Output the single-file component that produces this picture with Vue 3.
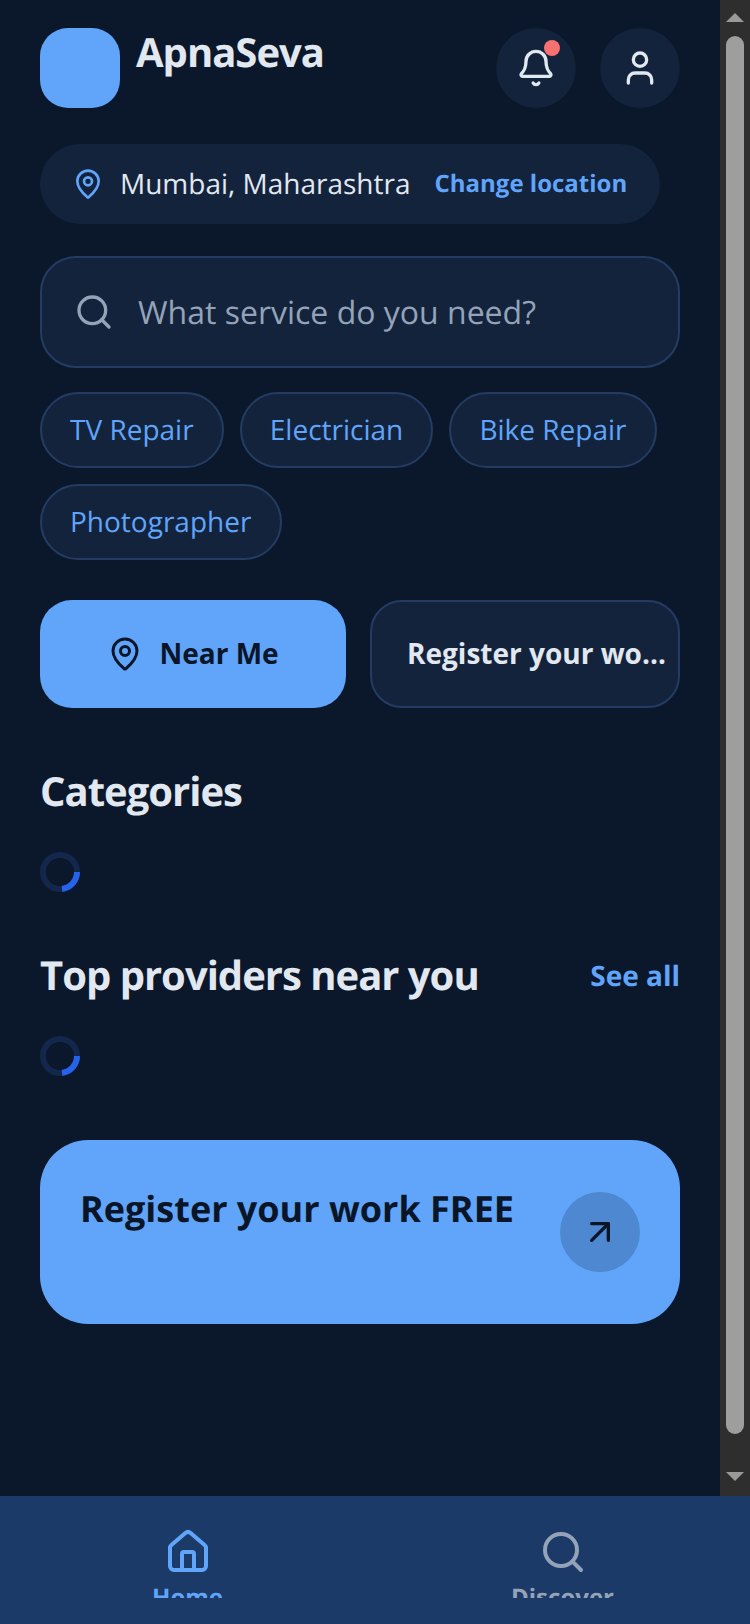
<template>
  <div class="app">
    <div class="body-row">
      <main class="content">
        <header class="top-bar">
          <div class="brand">
            <div class="logo"></div>
            <h1 class="brand-name">ApnaSeva</h1>
          </div>
          <div class="top-actions">
            <button class="round-btn">
              <svg class="icon-40" viewBox="0 0 24 24" fill="none" stroke="currentColor" stroke-width="2" stroke-linecap="round" stroke-linejoin="round">
                <path d="M10.268 21a2 2 0 0 0 3.464 0" />
                <path d="M3.262 15.326A1 1 0 0 0 4 17h16a1 1 0 0 0 .74-1.673C19.41 13.956 18 12.499 18 8A6 6 0 0 0 6 8c0 4.499-1.411 5.956-2.738 7.326" />
              </svg>
              <span class="badge"></span>
            </button>
            <button class="round-btn">
              <svg class="icon-40" viewBox="0 0 24 24" fill="none" stroke="currentColor" stroke-width="2" stroke-linecap="round" stroke-linejoin="round">
                <path d="M19 21v-2a4 4 0 0 0-4-4H9a4 4 0 0 0-4 4v2" />
                <circle cx="12" cy="7" r="4" />
              </svg>
            </button>
          </div>
        </header>

        <div class="location-pill">
          <svg class="pin" viewBox="0 0 24 24" fill="none" stroke="currentColor" stroke-width="2" stroke-linecap="round" stroke-linejoin="round">
            <path d="M20 10c0 4.993-5.539 10.193-7.399 11.799a1 1 0 0 1-1.202 0C9.539 20.193 4 14.993 4 10a8 8 0 0 1 16 0" />
            <circle cx="12" cy="10" r="3" />
          </svg>
          <span class="location-name">Mumbai, Maharashtra</span>
          <span class="location-change">Change location</span>
        </div>

        <div class="search-box">
          <svg class="search-icon" viewBox="0 0 24 24" fill="none" stroke="currentColor" stroke-width="2" stroke-linecap="round" stroke-linejoin="round">
            <path d="m21 21-4.34-4.34" />
            <circle cx="11" cy="11" r="8" />
          </svg>
          <span class="search-placeholder">What service do you need?</span>
        </div>

        <div class="chips">
          <span v-for="chip in chips" :key="chip" class="chip">{{ chip }}</span>
        </div>

        <div class="action-row">
          <button class="action action-primary">
            <svg class="icon-36" viewBox="0 0 24 24" fill="none" stroke="currentColor" stroke-width="2" stroke-linecap="round" stroke-linejoin="round">
              <path d="M20 10c0 4.993-5.539 10.193-7.399 11.799a1 1 0 0 1-1.202 0C9.539 20.193 4 14.993 4 10a8 8 0 0 1 16 0" />
              <circle cx="12" cy="10" r="3" />
            </svg>
            <span class="action-text">Near Me</span>
          </button>
          <button class="action action-secondary">
            <span class="action-text ellipsis">Register your work</span>
          </button>
        </div>

        <h2 class="section-title categories-title">Categories</h2>
        <svg class="spinner" viewBox="0 0 40 40" fill="none" stroke-width="6">
          <circle cx="20" cy="20" r="17" stroke="#13264b" />
          <path d="M37 20A17 17 0 0 1 22 36.9" stroke="#2563eb" />
        </svg>

        <div class="section-head">
          <h2 class="section-title">Top providers near you</h2>
          <span class="see-all">See all</span>
        </div>
        <svg class="spinner" viewBox="0 0 40 40" fill="none" stroke-width="6">
          <circle cx="20" cy="20" r="17" stroke="#13264b" />
          <path d="M37 20A17 17 0 0 1 22 36.9" stroke="#2563eb" />
        </svg>

        <section class="cta">
          <h3 class="cta-title">Register your work FREE</h3>
          <div class="cta-arrow">
            <svg class="icon-40" viewBox="0 0 24 24" fill="none" stroke="currentColor" stroke-width="2" stroke-linecap="round" stroke-linejoin="round">
              <path d="M7 7h10v10" />
              <path d="M7 17 17 7" />
            </svg>
          </div>
        </section>
      </main>

      <div class="scrollbar">
        <span class="arrow-up"></span>
        <span class="thumb"></span>
        <span class="arrow-down"></span>
      </div>
    </div>

    <nav class="bottom-nav">
      <div class="nav-item is-active">
        <svg class="icon-48" viewBox="0 0 24 24" fill="none" stroke="currentColor" stroke-width="2" stroke-linecap="round" stroke-linejoin="round">
          <path d="M15 21v-8a1 1 0 0 0-1-1h-4a1 1 0 0 0-1 1v8" />
          <path d="M3 10a2 2 0 0 1 .709-1.528l7-5.999a2 2 0 0 1 2.582 0l7 5.999A2 2 0 0 1 21 10v9a2 2 0 0 1-2 2H5a2 2 0 0 1-2-2z" />
        </svg>
        <span class="nav-label">Home</span>
      </div>
      <div class="nav-item">
        <svg class="icon-48" viewBox="0 0 24 24" fill="none" stroke="currentColor" stroke-width="2" stroke-linecap="round" stroke-linejoin="round">
          <path d="m21 21-4.34-4.34" />
          <circle cx="11" cy="11" r="8" />
        </svg>
        <span class="nav-label">Discover</span>
      </div>
    </nav>
  </div>
</template>

<script setup>
const chips = ['TV Repair', 'Electrician', 'Bike Repair', 'Photographer']
</script>

<style>
html,
body {
  margin: 0;
  background: #0b172a;
}
</style>

<style scoped>
* {
  box-sizing: border-box;
}

.app {
  display: flex;
  flex-direction: column;
  height: 1624px;
  overflow: hidden;
  font-family: "Open Sans", sans-serif;
  text-rendering: geometricPrecision;
  background: #0b172a;
  color: #e2e8f0;
}

.body-row {
  display: flex;
  height: 1496px;
}

.content {
  flex: 1;
  min-width: 0;
  display: flex;
  flex-direction: column;
  padding: 28px 40px 0;
}

.top-bar {
  display: flex;
  justify-content: space-between;
}

.brand {
  display: flex;
  gap: 16px;
}

.logo {
  width: 80px;
  height: 80px;
  border-radius: 28px;
  background: #60a5fa;
}

.brand-name {
  margin: 0;
  font-size: 40px;
  line-height: 48px;
  font-weight: 700;
  letter-spacing: -1px;
}

.top-actions {
  display: flex;
  gap: 24px;
}

.round-btn {
  position: relative;
  display: flex;
  align-items: center;
  justify-content: center;
  width: 80px;
  height: 80px;
  padding: 0;
  border: 0;
  border-radius: 50%;
  background: #13233c;
  color: #e2e8f0;
}

.badge {
  position: absolute;
  top: 12px;
  right: 16px;
  width: 16px;
  height: 16px;
  border-radius: 50%;
  background: #f87171;
}

.icon-36 {
  width: 36px;
  height: 36px;
}

.icon-40 {
  width: 40px;
  height: 40px;
}

.icon-48 {
  flex: none;
  width: 48px;
  height: 48px;
}

.location-pill {
  display: flex;
  align-items: center;
  align-self: flex-start;
  height: 80px;
  margin-top: 36px;
  padding: 0 33px 0 32px;
  border-radius: 40px;
  background: #13233c;
}

.pin {
  width: 32px;
  height: 32px;
  color: #60a5fa;
}

.location-name {
  margin-left: 16px;
  font-size: 28px;
}

.location-change {
  margin-left: 24px;
  margin-bottom: 2px;
  font-size: 24px;
  font-weight: 700;
  color: #60a5fa;
}

.search-box {
  display: flex;
  align-items: center;
  height: 112px;
  margin-top: 32px;
  padding: 0 32px;
  border: 2px solid #243c63;
  border-radius: 36px;
  background: #13233c;
}

.search-icon {
  flex: none;
  width: 40px;
  height: 40px;
  color: #94a3b8;
}

.search-placeholder {
  margin-left: 24px;
  font-size: 32px;
  color: #94a3b8;
}

.chips {
  display: flex;
  flex-wrap: wrap;
  gap: 16px;
  margin-top: 24px;
}

.chip {
  display: flex;
  align-items: center;
  height: 76px;
  padding: 0 28.2px 0 28px;
  border: 2px solid #243c63;
  border-radius: 38px;
  background: #13233c;
  font-size: 28px;
  color: #60a5fa;
}

.action-row {
  display: flex;
  gap: 24px;
  margin-top: 40px;
}

.action {
  display: flex;
  align-items: center;
  justify-content: center;
  height: 108px;
  border-radius: 32px;
  font-family: inherit;
  font-size: 28px;
  font-weight: 700;
}

.action-text {
  margin-bottom: 2px;
}

.action-primary {
  flex: none;
  width: 306px;
  gap: 16px;
  border: 0;
  background: #60a5fa;
  color: #0a1628;
}

.action-secondary {
  flex: 1;
  min-width: 0;
  padding: 0 12px 0 35px;
  border: 2px solid #243c63;
  background: #13233c;
  color: #e2e8f0;
}

.ellipsis {
  overflow: hidden;
  white-space: nowrap;
  text-overflow: ellipsis;
}

.section-title {
  margin: 0;
  font-size: 40px;
  line-height: 54px;
  font-weight: 700;
  letter-spacing: -1px;
}

.categories-title {
  margin-top: 56px;
}

.spinner {
  display: block;
  flex: none;
  width: 40px;
  height: 40px;
  margin-top: 34px;
}

.section-head {
  display: flex;
  align-items: center;
  justify-content: space-between;
  margin-top: 56px;
}

.see-all {
  margin-top: 2px;
  font-size: 28px;
  font-weight: 700;
  color: #60a5fa;
}

.cta {
  display: flex;
  align-items: center;
  justify-content: space-between;
  height: 184px;
  margin-top: 64px;
  padding: 0 40px;
  border-radius: 48px;
  background: #60a5fa;
  color: #0a1628;
}

.cta-title {
  align-self: flex-start;
  margin: 44px 0 0;
  font-size: 36px;
  line-height: 50px;
  font-weight: 700;
}

.cta-arrow {
  display: flex;
  align-items: center;
  justify-content: center;
  width: 80px;
  height: 80px;
  border-radius: 50%;
  background: rgba(10, 22, 40, 0.2);
}

.scrollbar {
  flex: none;
  display: flex;
  flex-direction: column;
  align-items: center;
  width: 30px;
  padding: 13px 0 15px;
  background: #2e2e2e;
}

.arrow-up,
.arrow-down {
  flex: none;
  width: 0;
  height: 0;
  border-left: 9px solid transparent;
  border-right: 9px solid transparent;
}

.arrow-up {
  border-bottom: 9px solid #9a9a9a;
}

.arrow-down {
  border-top: 9px solid #9a9a9a;
}

.thumb {
  flex: 1;
  width: 18px;
  margin: 14px 0 38px;
  border-radius: 9px;
  background: #9e9e9e;
}

.bottom-nav {
  flex: none;
  display: flex;
  height: 128px;
  padding-top: 32px;
  background: #1c3a68;
}

.nav-item {
  flex: 1;
  display: flex;
  flex-direction: column;
  align-items: center;
  height: 70px;
  overflow: hidden;
  color: #94a3b8;
}

.nav-item.is-active {
  color: #60a5fa;
}

.nav-label {
  margin-top: 6px;
  font-size: 24px;
  line-height: 32px;
  font-weight: 700;
}
</style>
